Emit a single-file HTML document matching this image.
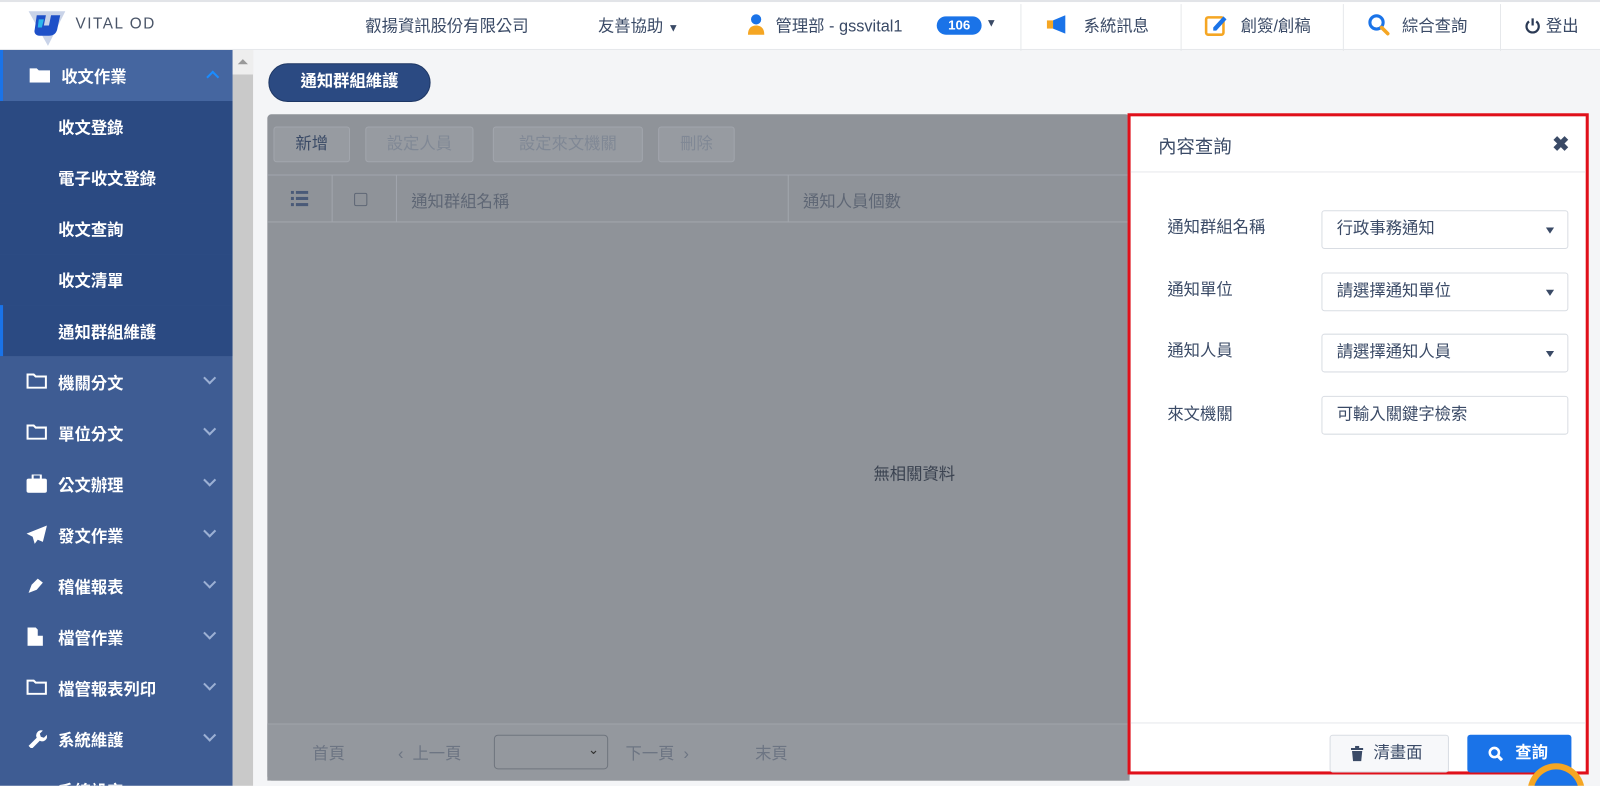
<!DOCTYPE html>
<html><head><meta charset="utf-8"><style>
*{box-sizing:border-box;margin:0;padding:0}
html,body{width:1600px;height:786px;overflow:hidden;background:#f4f5f7}
body{font-family:"Liberation Sans","Noto Sans CJK TC",sans-serif;color:#333}
#w{position:absolute;left:0;top:0;width:1568px;height:770px;transform:scale(1.0204);transform-origin:0 0;overflow:hidden}
.hdr{position:absolute;left:0;top:0;width:1568px;height:49px;background:#fff;border-top:2px solid #e2e4e8;border-bottom:1px solid #e6e8eb}
.hdr .t{position:absolute;top:10px;font-size:16px;color:#3a4a66}
.sep{position:absolute;top:2px;height:46px;width:1px;background:#e6e8eb}
.side{position:absolute;left:0;top:49px;width:228px;height:737px;background:#3e5c93}
.it{position:absolute;left:0;width:228px;height:50px;color:#fff;font-weight:bold;font-size:16px}
.it span{position:absolute;left:57px;top:13px}
.it .ic{position:absolute;left:26px;top:16px}
.chev{position:absolute;left:201px;top:17px;width:9px;height:9px;border-right:2.5px solid #9cb0d4;border-bottom:2.5px solid #9cb0d4;transform:rotate(45deg)}
.sub{background:#2b4a82}
.scr{position:absolute;left:228px;top:49px;width:20px;height:737px;background:#c9c9c9}
.scr .b{position:absolute;left:0;top:0;width:20px;height:24px;background:#eee}
.pill{position:absolute;left:263px;top:62px;width:159px;height:38px;border-radius:19px;background:#2b4a82;border:1px solid #1e3764;color:#fff;font-weight:bold;font-size:16px;text-align:center;line-height:36px}
.ov{position:absolute;left:262px;top:112px;width:845px;height:653px;background:#8f9399;border-radius:4px}
.btn{position:absolute;top:12px;height:35px;border:1px solid #a2a6ad;border-radius:3px;background:#979ba1;color:#808895;font-size:16px;line-height:33px;text-align:center}
.th{position:absolute;top:59px;left:0;width:845px;height:47px;border-top:1px solid #a2a6ad;border-bottom:1px solid #a2a6ad;font-size:16px;color:#5f6775}
.th div{position:absolute;top:0;height:46px;border-right:1px solid #a2a6ad}
.foot{position:absolute;left:0;top:597px;width:845px;height:56px;background:#94989e;border-top:1px solid #a0a4aa;font-size:16px;color:#6d7583}
.dr{position:absolute;left:1105px;top:111px;width:452px;height:648px;background:#fff;border:3px solid #e0101a}
.lbl{position:absolute;left:36px;font-size:16px;color:#3a4a66}
.sel{position:absolute;left:187px;width:242px;height:38px;border:1px solid #d9dde3;border-radius:3px;font-size:16px;color:#3a4a66;padding:0 14px;line-height:36px}
.sel i{position:absolute;right:13px;top:16px;border:4px solid transparent;border-top:6px solid #3a4a66}
</style></head><body><div id="w">
<div class="hdr">
 <svg style="position:absolute;left:28px;top:7px" width="40" height="38" viewBox="0 0 40 38"><path d="M0 2h36l-17 34z" fill="#c9d3e8"/><path d="M8 6h9l-2 10h5l2-10h9l-3 14c-1 4-4 6-8 6h-9c-4 0-6-3-5-6z" fill="#1e50c8"/><path d="M10 10h5l-2 8h-4z" fill="#2bb6ec"/></svg>
 <div class="t" style="left:74px;top:13px;font-size:15px;letter-spacing:1.5px;color:#4a5568">VITAL OD</div>
 <div class="t" style="left:358px">叡揚資訊股份有限公司</div>
 <div class="t" style="left:586px">友善協助 <span style="font-size:11px">▼</span></div>
 <svg style="position:absolute;left:732px;top:11px" width="18" height="22"><circle cx="9" cy="6" r="5" fill="#1a73e8"/><path d="M1 21c0-6 3-9 8-9s8 3 8 9z" fill="#f5a623"/></svg>
 <div class="t" style="left:760px">管理部 - gssvital1</div>
 <div style="position:absolute;left:918px;top:14px;width:44px;height:18px;border-radius:9px;background:#1a73e8;color:#fff;font-weight:bold;font-size:13px;text-align:center;line-height:18px">106</div>
 <div class="t" style="left:966px;top:15px;font-size:11px">▼</div>
 <div class="sep" style="left:1000px"></div>
 <svg style="position:absolute;left:1025px;top:13px" width="24" height="18"><rect x="1" y="5" width="6" height="8" fill="#f5a623"/><path d="M7 5l12-5v18l-12-5z" fill="#1a73e8"/></svg>
 <div class="t" style="left:1062px">系統訊息</div>
 <div class="sep" style="left:1157px"></div>
 <svg style="position:absolute;left:1180px;top:11px" width="24" height="24"><rect x="2" y="4" width="17" height="17" rx="2" fill="none" stroke="#f5a623" stroke-width="2.5"/><path d="M9 14l10-11 3 3-10 11h-3z" fill="#1a73e8"/></svg>
 <div class="t" style="left:1216px">創簽/創稿</div>
 <div class="sep" style="left:1316px"></div>
 <svg style="position:absolute;left:1340px;top:11px" width="24" height="24"><circle cx="9" cy="9" r="6.5" fill="none" stroke="#1a73e8" stroke-width="3"/><path d="M14 14l6 6" stroke="#f5a623" stroke-width="3.5" stroke-linecap="round"/></svg>
 <div class="t" style="left:1374px">綜合查詢</div>
 <div class="sep" style="left:1470px"></div>
 <svg style="position:absolute;left:1494px;top:15px" width="16" height="16"><path d="M4.5 4a6 6 0 1 0 7 0" fill="none" stroke="#2b3a55" stroke-width="2.2"/><path d="M8 1v7" stroke="#2b3a55" stroke-width="2.2"/></svg>
 <div class="t" style="left:1515px">登出</div>
</div>
<div class="side">
 <div class="it" style="top:0;background:#4566a0;border-left:3px solid #1a73e8"><svg class="ic" width="20" height="16"><path d="M0 2h7l2 2h11v12h-20z" fill="#fff"/></svg><span>收文作業</span><div class="chev" style="top:22px;transform:rotate(-135deg);border-color:#1a8cff"></div></div>
 <div class="it sub" style="top:50px"><span>收文登錄</span></div>
 <div class="it sub" style="top:100px"><span>電子收文登錄</span></div>
 <div class="it sub" style="top:150px"><span>收文查詢</span></div>
 <div class="it sub" style="top:200px"><span>收文清單</span></div>
 <div class="it sub" style="top:250px;border-left:3px solid #1a73e8"><span style="left:54px">通知群組維護</span></div>
 <div class="it" style="top:300px"><svg class="ic" width="20" height="16"><path d="M1 2h6l2 2h10v11h-18z" fill="none" stroke="#fff" stroke-width="2"/></svg><span>機關分文</span><div class="chev"></div></div>
 <div class="it" style="top:350px"><svg class="ic" width="20" height="16"><path d="M1 2h6l2 2h10v11h-18z" fill="none" stroke="#fff" stroke-width="2"/></svg><span>單位分文</span><div class="chev"></div></div>
 <div class="it" style="top:400px"><svg class="ic" width="20" height="18"><rect x="0" y="4" width="20" height="14" rx="2" fill="#fff"/><rect x="6" y="0" width="8" height="5" rx="1" fill="none" stroke="#fff" stroke-width="2"/></svg><span>公文辦理</span><div class="chev"></div></div>
 <div class="it" style="top:450px"><svg class="ic" width="20" height="18"><path d="M20 0l-20 8 6 3 2 7 3-4 5 2z" fill="#fff"/></svg><span>發文作業</span><div class="chev"></div></div>
 <div class="it" style="top:500px"><svg class="ic" width="20" height="18"><path d="M2 16l3-8 6-6 5 4-6 7z" fill="#fff"/></svg><span>稽催報表</span><div class="chev"></div></div>
 <div class="it" style="top:550px"><svg class="ic" width="18" height="18"><path d="M1 0h8l2 2v16h-10z M9 8h7v10h-7z" fill="#fff"/></svg><span>檔管作業</span><div class="chev"></div></div>
 <div class="it" style="top:600px"><svg class="ic" width="20" height="16"><path d="M1 2h6l2 2h10v11h-18z" fill="none" stroke="#fff" stroke-width="2"/></svg><span>檔管報表列印</span><div class="chev"></div></div>
 <div class="it" style="top:650px"><svg class="ic" width="20" height="18"><path d="M2 16l8-8a5 5 0 0 1 6-7l-3 3 1 3 3 1 3-3a5 5 0 0 1-7 6l-8 8z" fill="#fff"/></svg><span>系統維護</span><div class="chev"></div></div>
 <div class="it" style="top:700px"><span>系統設定</span></div>
</div>
<div class="scr"><div class="b"><div style="position:absolute;left:5px;top:9px;border:5px solid transparent;border-bottom:5px solid #999;border-top:0"></div></div></div>
<div class="pill">通知群組維護</div>
<div class="ov">
 <div class="btn" style="left:6px;width:75px;color:#3a4a66">新增</div>
 <div class="btn" style="left:96px;width:106px">設定人員</div>
 <div class="btn" style="left:221px;width:147px">設定來文機關</div>
 <div class="btn" style="left:383px;width:75px">刪除</div>
 <div class="th">
  <div style="left:0;width:64px"><svg style="position:absolute;left:23px;top:15px" width="18" height="16"><g fill="#4a5a78"><rect x="0" y="0" width="3" height="3"/><rect x="0" y="6" width="3" height="3"/><rect x="0" y="12" width="3" height="3"/><rect x="5" y="0" width="12" height="3"/><rect x="5" y="6" width="12" height="3"/><rect x="5" y="12" width="12" height="3"/></g></svg></div>
  <div style="left:64px;width:63px"><div style="position:absolute;left:21px;top:17px;width:13px;height:13px;border:1.5px solid #5f6775;border-radius:2px"></div></div>
  <div style="left:127px;width:384px;border-right:1px solid #a2a6ad"><span style="position:absolute;left:14px;top:12px">通知群組名稱</span></div>
  <div style="left:511px;width:334px;border:0"><span style="position:absolute;left:14px;top:12px">通知人員個數</span></div>
 </div>
 <div style="position:absolute;left:594px;top:339px;font-size:16px;color:#3a4250">無相關資料</div>
 <div class="foot">
  <span style="position:absolute;left:44px;top:15px">首頁</span>
  <span style="position:absolute;left:128px;top:15px">‹ &nbsp;上一頁</span>
  <div style="position:absolute;left:222px;top:10px;width:112px;height:34px;border:1px solid #6f757e;border-radius:4px"><span style="position:absolute;right:8px;top:6px;font-size:13px;color:#333">⌄</span></div>
  <span style="position:absolute;left:351px;top:15px">下一頁 &nbsp;›</span>
  <span style="position:absolute;left:478px;top:15px">末頁</span>
 </div>
</div>
<div class="dr">
 <div style="position:absolute;left:0;top:0;width:446px;height:55px;border-bottom:1px solid #e6e8eb">
  <span style="position:absolute;left:27px;top:16px;font-size:18px;color:#3a4a66">內容查詢</span>
  <span style="position:absolute;right:16px;top:15px;font-size:20px;font-weight:bold;color:#3a4a66">✖</span>
 </div>
 <div class="lbl" style="top:95px">通知群組名稱</div><div class="sel" style="top:92px">行政事務通知<i></i></div>
 <div class="lbl" style="top:156px">通知單位</div><div class="sel" style="top:153px">請選擇通知單位<i></i></div>
 <div class="lbl" style="top:216px">通知人員</div><div class="sel" style="top:213px">請選擇通知人員<i></i></div>
 <div class="lbl" style="top:278px">來文機關</div><div class="sel" style="top:274px">可輸入關鍵字檢索</div>
 <div style="position:absolute;left:0;top:594px;width:446px;height:1px;background:#e6e8eb"></div>
 <div style="position:absolute;left:195px;top:606px;width:117px;height:37px;border:1px solid #d9dde3;border-radius:3px;background:#f7f8fa;font-size:16px;color:#3a4a66;line-height:35px;padding-left:42px"><svg style="position:absolute;left:20px;top:10px" width="12" height="15"><path d="M0 2h12v2h-12zM4 0h4v2h-4zM1 5h10l-1 10h-8z" fill="#3a4a66"/></svg>清畫面</div>
 <div style="position:absolute;left:330px;top:606px;width:102px;height:37px;border-radius:3px;background:#1a73e8;font-size:16px;font-weight:bold;color:#fff;line-height:37px;padding-left:47px"><svg style="position:absolute;left:20px;top:11px" width="16" height="16"><circle cx="6.5" cy="6.5" r="4.5" fill="none" stroke="#fff" stroke-width="2.5"/><path d="M10 10l4 4" stroke="#fff" stroke-width="3"/></svg>查詢</div>
</div>
<div style="position:absolute;left:1497px;top:748px;width:56px;height:56px;border-radius:50%;background:#f5a623"><div style="position:absolute;left:6px;top:6px;width:44px;height:44px;border-radius:50%;background:#1a73e8"></div></div>
</div></body></html>
